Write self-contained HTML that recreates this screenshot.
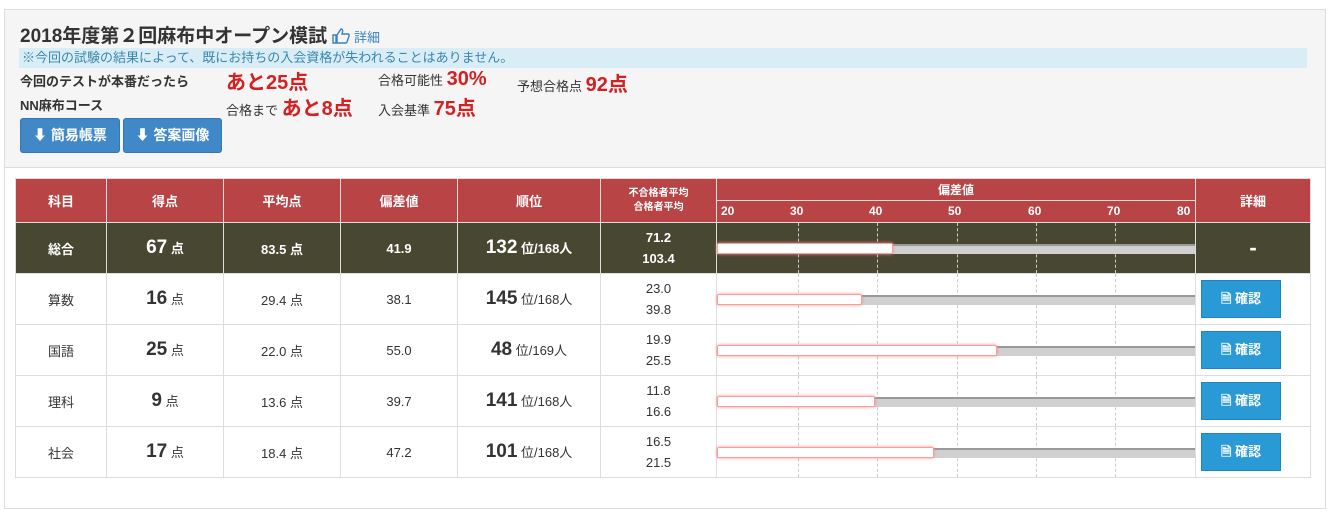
<!DOCTYPE html>
<html><head><meta charset="utf-8"><style>
*{box-sizing:border-box;margin:0;padding:0}
body{width:1330px;height:519px;background:#fff;font-family:"Liberation Sans","Noto Sans CJK JP",sans-serif;color:#333;position:relative;overflow:hidden}
.panel{position:absolute;left:4px;top:9px;width:1322px;height:500px;border:1px solid #ddd;background:#fff}
.head{position:absolute;left:0;top:0;width:1320px;height:158px;background:#f5f5f5;border-bottom:1px solid #ddd}
.a{position:absolute;white-space:nowrap}
.red{color:#d42020;font-weight:bold;font-size:20px}
.btn{position:absolute;top:108px;height:35px;background:#4088c8;border:1px solid #3577b3;border-radius:3px;color:#fff;font-size:14px;font-weight:bold;line-height:33px;text-align:center}
table{position:absolute;left:15px;top:178px;border-collapse:collapse;table-layout:fixed}
td,th{border:1px solid #ddd;text-align:center;font-size:13px;padding:0}
th{background:#b94446;color:#fff;font-weight:bold;border-color:#ddd}
tr.r td{height:51px}
tr.tot td{background:#484732;color:#fff;font-weight:bold}
.big{font-size:19px;font-weight:bold}
.chart{position:relative}
.dl{position:absolute;top:0;bottom:0;border-left:1px dashed #ccc}
.gb{position:absolute;left:0;right:0;top:21px;height:10px;background:#d0d0d0;border-top:2px solid #999}
.wb{position:absolute;left:0;top:20px;height:11px;background:#fff;border:1px solid #f5a0a0;border-radius:2px;box-shadow:0 0 3px #f88}
td.cfc{text-align:left;padding-left:5px}
.cf{display:inline-block;width:80px;height:38px;background:#2a9ad6;border:1px solid #1f84c0;color:#fff;font-weight:bold;font-size:13px;line-height:36px;text-align:center}
.tick{position:absolute;top:3px;font-size:12px;font-weight:bold}
</style></head><body>
<div class="panel">
<div class="head">
<div class="a" style="left:15px;top:11px;font-size:19px;font-weight:bold;color:#333">2018年度第２回麻布中オープン模試 <span style="font-size:13px;font-weight:normal;color:#3a82c4">
<svg width="18" height="16" viewBox="0 0 18 16" style="vertical-align:-2px"><path d="M1 7h3v8H1zM5 7l4-6c1 0 2 1 1.5 3L10 6h6c1 0 1.5 1 1 2l-2 6c-.3.7-1 1-1.5 1H5z" fill="none" stroke="#3a82c4" stroke-width="1.4"/></svg> 詳細</span></div>
<div class="a" style="left:14px;top:38px;width:1288px;height:20px;background:#d9edf7;color:#3a87ad;font-size:13px;line-height:20px;padding-left:3px">※今回の試験の結果によって、既にお持ちの入会資格が失われることはありません。</div>
<div class="a" style="left:15px;top:61px;font-size:13px;font-weight:bold">今回のテストが本番だったら</div>
<div class="a red" style="left:221px;top:56px">あと25点</div>
<div class="a" style="left:373px;top:58px;font-size:13px">合格可能性 <span class="red">30%</span></div>
<div class="a" style="left:512px;top:58px;font-size:13px">予想合格点 <span class="red">92点</span></div>
<div class="a" style="left:15px;top:85px;font-size:13px;font-weight:bold">NN麻布コース</div>
<div class="a" style="left:221px;top:82px;font-size:13px">合格まで <span class="red">あと8点</span></div>
<div class="a" style="left:373px;top:82px;font-size:13px">入会基準 <span class="red">75点</span></div>
<div class="btn" style="left:15px;width:100px">⬇ 簡易帳票</div>
<div class="btn" style="left:118px;width:99px">⬇ 答案画像</div>
</div>
</div>
<table>
<colgroup><col style="width:91px"><col style="width:117px"><col style="width:117px"><col style="width:117px"><col style="width:143px"><col style="width:116px"><col style="width:479px"><col style="width:115px"></colgroup>
<tr style="height:22px"><th rowspan="2">科目</th><th rowspan="2">得点</th><th rowspan="2">平均点</th><th rowspan="2">偏差値</th><th rowspan="2">順位</th><th rowspan="2" style="font-size:10px;line-height:14px">不合格者平均<br>合格者平均</th><th style="font-size:12px">偏差値</th><th rowspan="2">詳細</th></tr>
<tr style="height:22px"><th class="chart"><span class="tick" style="left:4px">20</span><span class="tick" style="left:73px">30</span><span class="tick" style="left:152px">40</span><span class="tick" style="left:231px">50</span><span class="tick" style="left:311px">60</span><span class="tick" style="left:390px">70</span><span class="tick" style="left:460px">80</span></th></tr>
<tr class="r tot"><td>総合</td><td><span class="big">67</span> 点</td><td>83.5 点</td><td>41.9</td><td><span class="big">132</span> 位/168人</td><td style="line-height:21px">71.2<br>103.4</td><td class="chart"><div class="dl" style="left:81px"></div><div class="dl" style="left:160px"></div><div class="dl" style="left:240px"></div><div class="dl" style="left:319px"></div><div class="dl" style="left:398px"></div><div class="gb"></div><div class="wb" style="width:176px"></div></td><td style="font-size:22px">-</td></tr>
<tr class="r"><td>算数</td><td><span class="big">16</span> 点</td><td>29.4 点</td><td>38.1</td><td><span class="big">145</span> 位/168人</td><td style="line-height:21px">23.0<br>39.8</td><td class="chart"><div class="dl" style="left:81px"></div><div class="dl" style="left:160px"></div><div class="dl" style="left:240px"></div><div class="dl" style="left:319px"></div><div class="dl" style="left:398px"></div><div class="gb"></div><div class="wb" style="width:145px"></div></td><td class="cfc"><span class="cf">🗎 確認</span></td></tr>
<tr class="r"><td>国語</td><td><span class="big">25</span> 点</td><td>22.0 点</td><td>55.0</td><td><span class="big">48</span> 位/169人</td><td style="line-height:21px">19.9<br>25.5</td><td class="chart"><div class="dl" style="left:81px"></div><div class="dl" style="left:160px"></div><div class="dl" style="left:240px"></div><div class="dl" style="left:319px"></div><div class="dl" style="left:398px"></div><div class="gb"></div><div class="wb" style="width:280px"></div></td><td class="cfc"><span class="cf">🗎 確認</span></td></tr>
<tr class="r"><td>理科</td><td><span class="big">9</span> 点</td><td>13.6 点</td><td>39.7</td><td><span class="big">141</span> 位/168人</td><td style="line-height:21px">11.8<br>16.6</td><td class="chart"><div class="dl" style="left:81px"></div><div class="dl" style="left:160px"></div><div class="dl" style="left:240px"></div><div class="dl" style="left:319px"></div><div class="dl" style="left:398px"></div><div class="gb"></div><div class="wb" style="width:158px"></div></td><td class="cfc"><span class="cf">🗎 確認</span></td></tr>
<tr class="r"><td>社会</td><td><span class="big">17</span> 点</td><td>18.4 点</td><td>47.2</td><td><span class="big">101</span> 位/168人</td><td style="line-height:21px">16.5<br>21.5</td><td class="chart"><div class="dl" style="left:81px"></div><div class="dl" style="left:160px"></div><div class="dl" style="left:240px"></div><div class="dl" style="left:319px"></div><div class="dl" style="left:398px"></div><div class="gb"></div><div class="wb" style="width:217px"></div></td><td class="cfc"><span class="cf">🗎 確認</span></td></tr>
</table>
</body></html>
